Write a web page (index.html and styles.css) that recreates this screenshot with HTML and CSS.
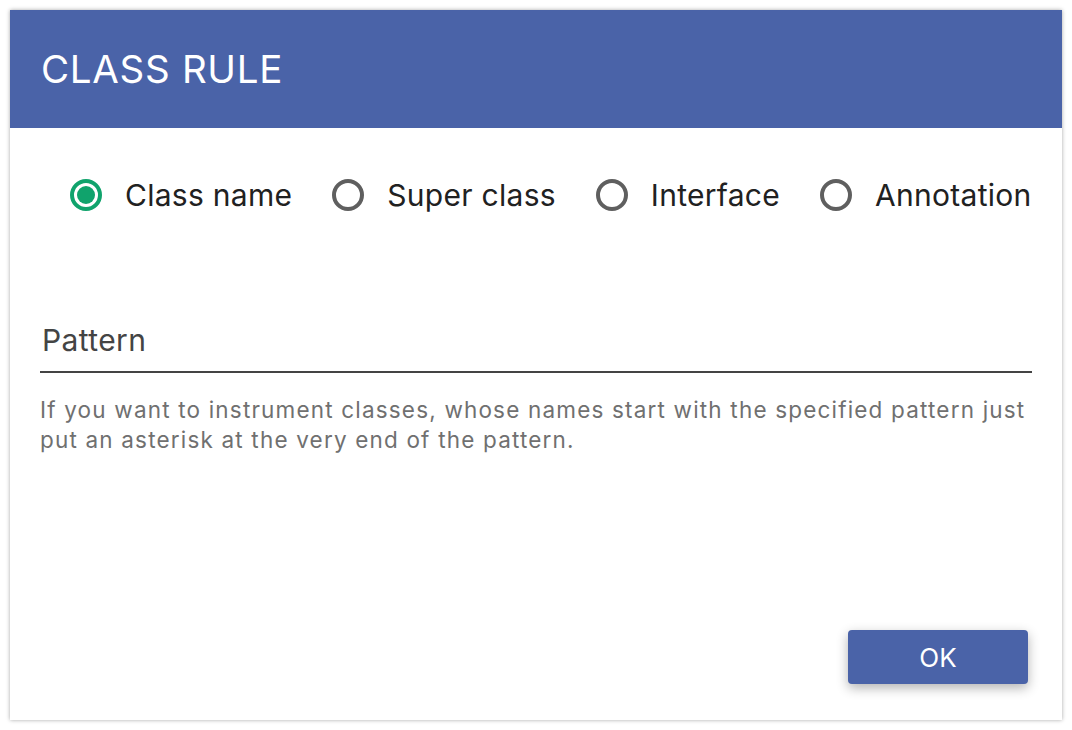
FILE: index.html
```html
<!DOCTYPE html>
<html>
<head>
<meta charset="utf-8">
<link rel="stylesheet" href="styles.css">
</head>
<body>
<div class="dialog">
  <div class="header"><h1 class="title">CLASS RULE</h1></div>
  <div class="body">
    <div class="radios">
      <label class="radio checked"><span class="dot"></span><span class="rlabel">Class name</span></label>
      <label class="radio"><span class="dot"></span><span class="rlabel">Super class</span></label>
      <label class="radio"><span class="dot"></span><span class="rlabel">Interface</span></label>
      <label class="radio"><span class="dot"></span><span class="rlabel">Annotation</span></label>
    </div>
    <div class="field">
      <div class="flabel">Pattern</div>
    </div>
    <p class="help">If you want to instrument classes, whose names start with the specified pattern just put an asterisk at the very end of the pattern.</p>
    <div class="actions"><button class="ok">OK</button></div>
  </div>
</div>
</body>
</html>
```

FILE: styles.css
```css
html, body { margin: 0; padding: 0; background: #fff; }
body { padding: 10px; font-family: Inter, Roboto, "Liberation Sans", sans-serif; }
.dialog {
  width: 1052px; height: 710px; box-sizing: border-box;
  background: #fff;
  box-shadow: 0 0 4px rgba(0,0,0,0.35);
  display: flex; flex-direction: column;
}
.header { background: #4a63a8; height: 118px; display: flex; align-items: center; padding-left: 31px; }
.title { margin: 0; color: #fff; font-weight: 400; font-size: 38.5px; letter-spacing: 0.7px; }
.body { flex: 1; display: flex; flex-direction: column; padding: 0 30px 36px 30px; }
.radios { display: flex; padding-left: 30px; margin-top: 49px; gap: 40px; white-space: nowrap; }
.radio { display: flex; align-items: center; gap: 23px; flex: none; }
.dot { width: 32px; height: 32px; border-radius: 50%; border: 4px solid #5f5f5f; box-sizing: border-box; position: relative; flex: none; }
.radio.checked .dot { border-color: #10a36c; }
.radio.checked .dot::after { content: ""; position: absolute; left: 3px; top: 3px; width: 18px; height: 18px; border-radius: 50%; background: #10a36c; }
.rlabel { font-size: 30px; letter-spacing: 0.28px; color: #212121; line-height: 36px; }
.field { margin-top: 110px; border-bottom: 2px solid #444; padding: 0 0 14px 2px; }
.flabel { font-size: 30px; letter-spacing: 0.4px; color: #444; line-height: 34px; }
.help { margin: 22px 0 0 0; font-size: 22.5px; letter-spacing: 1.18px; line-height: 30px; color: #707070; }
.actions { margin-top: auto; display: flex; justify-content: flex-end; padding-right: 4px; }
.ok {
  width: 180px; height: 54px; border: none; border-radius: 4px;
  background: #4a63a8; color: #fff; font-family: inherit; font-size: 26px;
  box-shadow: 0 4px 12px rgba(0,0,0,0.3);
}
```
